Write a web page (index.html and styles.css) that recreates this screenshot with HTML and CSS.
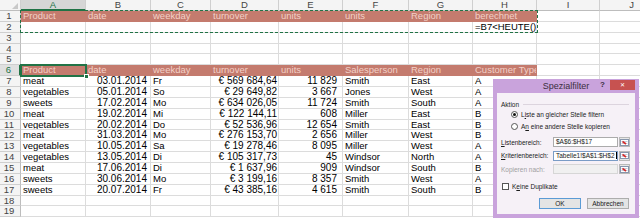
FILE: index.html
```html
<!DOCTYPE html>
<html>
<head>
<meta charset="utf-8">
<link rel="stylesheet" href="styles.css">
</head>
<body>
<div class="sheet">
  <div class="row colhdr">
    <div class="c ch corner"><i class="tri"></i></div>
    <div class="c ch sel">A</div><div class="c ch">B</div><div class="c ch">C</div><div class="c ch">D</div><div class="c ch">E</div><div class="c ch">F</div><div class="c ch">G</div><div class="c ch">H</div><div class="c ch">I</div><div class="c ch">J</div>
  </div>
  <div class="row"><div class="c rh">1</div><div class="c hd">Product</div><div class="c hd">date</div><div class="c hd">weekday</div><div class="c hd">turnover</div><div class="c hd">units</div><div class="c hd">units</div><div class="c hd">Region</div><div class="c hd">berechnet</div><div class="c"></div><div class="c"></div></div>
  <div class="row"><div class="c rh">2</div><div class="c"></div><div class="c"></div><div class="c"></div><div class="c"></div><div class="c"></div><div class="c"></div><div class="c"></div><div class="c">=B7&lt;HEUTE()</div><div class="c"></div><div class="c"></div></div>
  <div class="row"><div class="c rh">3</div><div class="c"></div><div class="c"></div><div class="c"></div><div class="c"></div><div class="c"></div><div class="c"></div><div class="c"></div><div class="c"></div><div class="c"></div><div class="c"></div></div>
  <div class="row"><div class="c rh">4</div><div class="c"></div><div class="c"></div><div class="c"></div><div class="c"></div><div class="c"></div><div class="c"></div><div class="c"></div><div class="c"></div><div class="c"></div><div class="c"></div></div>
  <div class="row"><div class="c rh">5</div><div class="c"></div><div class="c"></div><div class="c"></div><div class="c"></div><div class="c"></div><div class="c"></div><div class="c"></div><div class="c"></div><div class="c"></div><div class="c"></div></div>
  <div class="row"><div class="c rh selr">6</div><div class="c hd">Product</div><div class="c hd">date</div><div class="c hd">weekday</div><div class="c hd">turnover</div><div class="c hd">units</div><div class="c hd">Salesperson</div><div class="c hd">Region</div><div class="c hd">Customer Type</div><div class="c"></div><div class="c"></div></div>
  <div class="row"><div class="c rh">7</div><div class="c">meat</div><div class="c dt">03.01.2014</div><div class="c">Fr</div><div class="c eur">€ 569 684,64</div><div class="c un">11 829</div><div class="c">Smith</div><div class="c">East</div><div class="c">A</div><div class="c"></div><div class="c"></div></div>
  <div class="row"><div class="c rh">8</div><div class="c">vegetables</div><div class="c dt">05.01.2014</div><div class="c">So</div><div class="c eur">€ 29 649,82</div><div class="c un">3 667</div><div class="c">Jones</div><div class="c">West</div><div class="c">A</div><div class="c"></div><div class="c"></div></div>
  <div class="row"><div class="c rh">9</div><div class="c">sweets</div><div class="c dt">17.02.2014</div><div class="c">Mo</div><div class="c eur">€ 634 026,05</div><div class="c un">11 724</div><div class="c">Smith</div><div class="c">South</div><div class="c">A</div><div class="c"></div><div class="c"></div></div>
  <div class="row"><div class="c rh">10</div><div class="c">meat</div><div class="c dt">19.02.2014</div><div class="c">Mi</div><div class="c eur">€ 122 144,11</div><div class="c un">608</div><div class="c">Miller</div><div class="c">East</div><div class="c">B</div><div class="c"></div><div class="c"></div></div>
  <div class="row"><div class="c rh">11</div><div class="c">vegetables</div><div class="c dt">20.02.2014</div><div class="c">Do</div><div class="c eur">€ 52 536,96</div><div class="c un">12 654</div><div class="c">Smith</div><div class="c">East</div><div class="c">B</div><div class="c"></div><div class="c"></div></div>
  <div class="row"><div class="c rh">12</div><div class="c">meat</div><div class="c dt">31.03.2014</div><div class="c">Mo</div><div class="c eur">€ 276 153,70</div><div class="c un">2 656</div><div class="c">Miller</div><div class="c">West</div><div class="c">B</div><div class="c"></div><div class="c"></div></div>
  <div class="row"><div class="c rh">13</div><div class="c">vegetables</div><div class="c dt">10.05.2014</div><div class="c">Sa</div><div class="c eur">€ 19 278,46</div><div class="c un">8 095</div><div class="c">Miller</div><div class="c">West</div><div class="c">A</div><div class="c"></div><div class="c"></div></div>
  <div class="row"><div class="c rh">14</div><div class="c">vegetables</div><div class="c dt">13.05.2014</div><div class="c">Di</div><div class="c eur">€ 105 317,73</div><div class="c un">45</div><div class="c">Windsor</div><div class="c">North</div><div class="c">A</div><div class="c"></div><div class="c"></div></div>
  <div class="row"><div class="c rh">15</div><div class="c">meat</div><div class="c dt">17.06.2014</div><div class="c">Di</div><div class="c eur">€ 1 637,96</div><div class="c un">909</div><div class="c">Windsor</div><div class="c">South</div><div class="c">B</div><div class="c"></div><div class="c"></div></div>
  <div class="row"><div class="c rh">16</div><div class="c">sweets</div><div class="c dt">30.06.2014</div><div class="c">Mo</div><div class="c eur">€ 3 199,16</div><div class="c un">8 357</div><div class="c">Smith</div><div class="c">West</div><div class="c">A</div><div class="c"></div><div class="c"></div></div>
  <div class="row"><div class="c rh">17</div><div class="c">sweets</div><div class="c dt">20.07.2014</div><div class="c">Fr</div><div class="c eur">€ 43 385,16</div><div class="c un">4 615</div><div class="c">Smith</div><div class="c">South</div><div class="c">B</div><div class="c"></div><div class="c"></div></div>
  <div class="row"><div class="c rh">18</div><div class="c"></div><div class="c"></div><div class="c"></div><div class="c"></div><div class="c"></div><div class="c"></div><div class="c"></div><div class="c"></div><div class="c"></div><div class="c"></div></div>
  <div class="row"><div class="c rh">19</div><div class="c"></div><div class="c"></div><div class="c"></div><div class="c"></div><div class="c"></div><div class="c"></div><div class="c"></div><div class="c"></div><div class="c"></div><div class="c"></div></div>

  <div class="ants"></div>
  <div class="cursor"><i class="handle"></i></div>

  <div class="dlg">
    <div class="dlg-title">
      <span></span>
      <span class="dlg-name">Spezialfilter</span>
      <span class="dlg-ctrls"><span class="dlg-help">?</span><span class="dlg-close">✕</span></span>
    </div>
    <div class="dlg-body">
      <div class="grp"><span>Aktion</span><i class="grp-line"></i></div>
      <div class="opt"><span class="radio on"></span><span>L<u>i</u>ste an gleicher Stelle filtern</span></div>
      <div class="opt"><span class="radio"></span><span>A<u>n</u> eine andere Stelle kopieren</span></div>
      <div class="field f1"><span class="lbl"><u>L</u>istenbereich:</span><span class="inp">$A$6:$H$17</span><span class="pick"><svg width="9" height="7" viewBox="0 0 9 7"><rect x="0.5" y="0.5" width="8" height="6" fill="#fff" stroke="#8796ad"/><path d="M1.5 2.5h6M1.5 4.5h6" stroke="#c3cddc"/><path d="M2.5 2.5l3.5 2.5" stroke="#d42a2a" stroke-width="1.6"/></svg></span></div>
      <div class="field"><span class="lbl"><u>K</u>riterienbereich:</span><span class="inp active">Tabelle1!$A$1:$H$2<i class="caret"></i></span><span class="pick"><svg width="9" height="7" viewBox="0 0 9 7"><rect x="0.5" y="0.5" width="8" height="6" fill="#fff" stroke="#8796ad"/><path d="M1.5 2.5h6M1.5 4.5h6" stroke="#c3cddc"/><path d="M2.5 2.5l3.5 2.5" stroke="#d42a2a" stroke-width="1.6"/></svg></span></div>
      <div class="field off"><span class="lbl">Kopieren nach:</span><span class="inp dis"></span><span class="pick"><svg width="9" height="7" viewBox="0 0 9 7"><rect x="0.5" y="0.5" width="8" height="6" fill="#fff" stroke="#8796ad"/><path d="M1.5 2.5h6M1.5 4.5h6" stroke="#c3cddc"/><path d="M2.5 2.5l3.5 2.5" stroke="#d42a2a" stroke-width="1.6"/></svg></span></div>
      <div class="chk"><span class="box"></span><span>K<u>e</u>ine Duplikate</span></div>
      <div class="btns"><span class="btn def">OK</span><span class="btn">Abbrechen</span></div>
    </div>
  </div>
</div>
</body>
</html>
```

FILE: styles.css
```css
* { box-sizing: border-box; margin: 0; padding: 0; }
html, body { width: 640px; height: 218px; overflow: hidden; background: #fff; }
body { font-family: "Liberation Sans", Arial, sans-serif; color: #000; }

.sheet { position: relative; width: 640px; height: 218px; }

.row {
  display: grid;
  grid-template-columns: 21px 65px 65px 60px 68px 64px 66px 64px 64px 63px 64px;
  height: 10.87px;
}
.row.colhdr { height: 11px; }

.c {
  border-right: 1px solid #dcdcdc;
  border-bottom: 1px solid #dcdcdc;
  font-size: 9.5px;
  line-height: 10.5px;
  padding: 0 2px;
  white-space: nowrap;
  overflow: hidden;
}

.ch {
  background: #f4f4f4;
  border-right-color: #cfcfcf;
  border-bottom-color: #bdbdbd;
  color: #444;
  text-align: center;
  line-height: 10px;
}
.ch.sel {
  background: #d6d6d6;
  color: #217346;
  border-bottom: 2px solid #217346;
}
.corner { position: relative; }
.tri {
  position: absolute;
  right: 2px;
  bottom: 1px;
  width: 0;
  height: 0;
  border-left: 6px solid transparent;
  border-bottom: 6px solid #c8c8c8;
}

.rh {
  background: #f4f4f4;
  border-right-color: #bdbdbd;
  border-bottom-color: #cfcfcf;
  color: #444;
  text-align: center;
  padding: 0 2px 0 0;
}
.rh.selr {
  background: #e0e0e0;
  color: #217346;
  border-right: 2px solid #217346;
}

.hd {
  background: #c47b6e;
  border-color: transparent;
  color: #f3d0c7;
}

.dt { text-align: right; font-size: 10px; padding-right: 3px; }
.eur { text-align: right; font-size: 10px; padding-right: 1px; }
.un { text-align: right; font-size: 10px; padding-right: 5px; }

.ants {
  position: absolute;
  left: 20px;
  top: 10px;
  width: 518px;
  height: 23px;
  border: 1px dashed #217346;
}
.cursor {
  position: absolute;
  left: 20px;
  top: 64px;
  width: 67px;
  height: 13px;
  border: 2px solid #217346;
}
.handle {
  position: absolute;
  right: -4px;
  bottom: -4px;
  width: 5px;
  height: 5px;
  background: #217346;
  border: 1px solid #fff;
}

/* dialog */
.dlg {
  position: absolute;
  left: 493px;
  top: 79px;
  width: 146px;
  height: 139px;
  background: #c9a3dc;
  padding: 0 4px 4px 4px;
  display: flex;
  flex-direction: column;
}
.dlg-title {
  height: 14px;
  display: grid;
  grid-template-columns: 1fr auto 1fr;
  align-items: start;
}
.dlg-name {
  font-size: 9px;
  line-height: 14px;
  color: #3a2f40;
}
.dlg-ctrls {
  display: flex;
  justify-content: flex-end;
  align-items: flex-start;
  padding-top: 1px;
}
.dlg-help {
  font-size: 8px;
  font-weight: bold;
  color: #3a2f40;
  line-height: 10px;
  margin-right: 5px;
}
.dlg-close {
  width: 25px;
  height: 10px;
  background: #c75250;
  color: #fff;
  font-size: 6px;
  line-height: 10px;
  text-align: center;
}
.dlg-body {
  flex: 1;
  background: #f6f1f7;
  padding: 6px 4px 0 4px;
  display: flex;
  flex-direction: column;
  font-size: 6.5px;
  color: #1a1a1a;
}
.grp {
  height: 10px;
  display: flex;
  align-items: center;
  gap: 4px;
}
.grp-line {
  flex: 1;
  border-top: 1px solid #dcd4de;
  margin-right: 2px;
}
.opt {
  height: 11.5px;
  display: flex;
  align-items: center;
  gap: 3px;
  padding-left: 10px;
}
.radio {
  width: 7px;
  height: 7px;
  border-radius: 50%;
  border: 1px solid #555;
  background: #fff;
  display: flex;
  align-items: center;
  justify-content: center;
}
.radio.on::after {
  content: "";
  width: 3px;
  height: 3px;
  border-radius: 50%;
  background: #111;
}
.field {
  height: 10px;
  display: flex;
  align-items: center;
  margin-top: 3.5px;
}
.field.f1 { margin-top: 5px; }
.lbl { width: 52px; }
.inp {
  width: 65px;
  height: 10px;
  background: #fff;
  border: 1px solid #ababab;
  padding-left: 2px;
  line-height: 8px;
  overflow: hidden;
  white-space: nowrap;
  display: flex;
  align-items: center;
}
.inp.active { border-color: #7a9cc6; }
.caret {
  width: 0;
  height: 7px;
  border-left: 1px solid #000;
  margin-left: 1px;
}
.inp.dis { background: #f0f0f0; border-color: #d6d6d6; }
.field.off .lbl { color: #a0a0a0; }
.pick {
  width: 11px;
  height: 10px;
  margin-left: 1px;
  background: #e6e6e6;
  border: 1px solid #b9b9b9;
  display: flex;
  align-items: center;
  justify-content: center;
}
.chk {
  height: 8px;
  margin-top: 8px;
  display: flex;
  align-items: center;
  gap: 3px;
  padding-left: 1px;
}
.box {
  width: 7px;
  height: 7px;
  border: 1px solid #555;
  background: #fff;
}
.btns {
  margin-top: 8px;
  display: flex;
  justify-content: flex-end;
  gap: 6px;
  padding-right: 2px;
}
.btn {
  width: 42px;
  height: 11px;
  background: #e4e4e4;
  border: 1px solid #adadad;
  text-align: center;
  line-height: 9px;
}
.btn.def { border-color: #5b9bd5; }
u { text-decoration: underline; }
```
